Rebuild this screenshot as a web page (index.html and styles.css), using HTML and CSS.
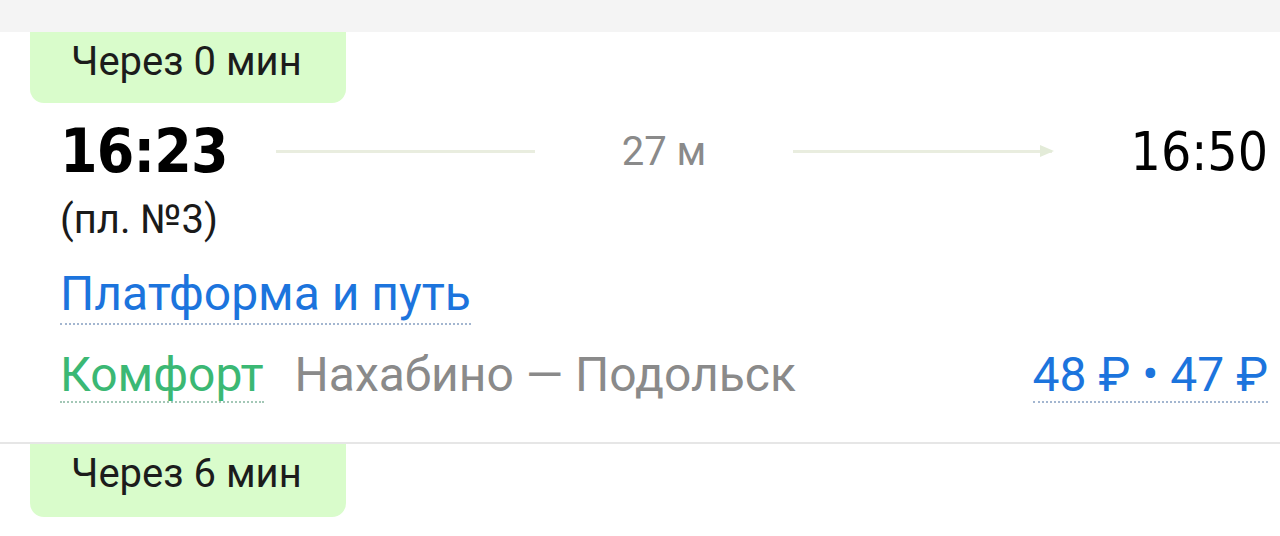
FILE: index.html
```html
<!DOCTYPE html>
<html lang="ru">
<head>
<meta charset="utf-8">
<link rel="stylesheet" href="styles.css">
</head>
<body>
<div class="topbar"></div>
<section class="trip">
  <div class="badge">Через 0 мин</div>
  <div class="body">
    <div class="times">
      <div class="dep">16:23</div>
      <div class="line"></div>
      <div class="dur">27 м</div>
      <div class="line arrow">
        <svg class="head" width="14" height="12" viewBox="0 0 14 12"><path d="M0 0 L14 6 L0 12 Z" fill="#e3ebd8"/></svg>
      </div>
      <div class="arr">16:50</div>
    </div>
    <div class="plat">(пл. №3)</div>
    <div class="link-row"><span class="link">Платформа и путь</span></div>
    <div class="info">
      <span class="cls">Комфорт</span>
      <span class="route">Нахабино — Подольск</span>
      <span class="price">48 ₽ • 47 ₽</span>
    </div>
  </div>
</section>
<section class="trip next">
  <div class="badge tall">Через 6 мин</div>
</section>
</body>
</html>
```
FILE: styles.css
```css
html, body {
  margin: 0;
  padding: 0;
  background: #ffffff;
  width: 1280px;
  height: 536px;
  overflow: hidden;
  font-family: Roboto, "Noto Sans", sans-serif;
}
.topbar {
  height: 32px;
  background: #f4f4f4;
}
.trip {
  padding-left: 30px;
}
.trip.next {
  border-top: 2px solid #e6e6e6;
}
.badge {
  width: 316px;
  height: 71px;
  box-sizing: border-box;
  padding-left: 41px;
  background: #d9fccb;
  border-radius: 0 0 14px 14px;
  color: #1c1c1c;
  font-size: 40px;
  line-height: 60px;
}
.badge.tall {
  height: 73px;
}
.body {
  padding-left: 30px;
  padding-right: 12px;
  height: 339px;
  box-sizing: border-box;
}
.times {
  display: flex;
  align-items: center;
  height: 96px;
}
.dep {
  font-family: "DejaVu Sans Condensed", "DejaVu Sans", sans-serif;
  font-weight: bold;
  font-size: 60px;
  letter-spacing: -0.8px;
  color: #000;
  width: 216px;
}
.line {
  height: 3px;
  background: #e9eddf;
  width: 259px;
  position: relative;
}
.arrow .head {
  position: absolute;
  right: -2px;
  top: -5px;
}
.dur {
  width: 258px;
  text-align: center;
  color: #8a8a8a;
  font-size: 40px;
}
.arr {
  flex: 1;
  text-align: right;
  font-family: "DejaVu Sans Condensed", "DejaVu Sans", sans-serif;
  font-size: 53px;
  color: #000;
}
.plat {
  font-size: 40px;
  color: #1a1a1a;
  line-height: 40px;
  margin-top: 1px;
}
.link-row {
  margin-top: 30px;
  font-size: 48px;
  line-height: 48px;
}
.link {
  color: #1c74dd;
  border-bottom: 2px dotted #a3b6d0;
  padding-bottom: 1px;
}
.info {
  display: flex;
  align-items: baseline;
  margin-top: 33px;
  font-size: 48px;
  line-height: 48px;
}
.cls {
  color: #3bb874;
  border-bottom: 2px dotted #a3c7b6;
  padding-bottom: 2px;
}
.route {
  color: #8a8a8a;
  margin-left: 31px;
}
.price {
  margin-left: auto;
  color: #1c74dd;
  border-bottom: 2px dotted #a3b6d0;
  padding-bottom: 2px;
}
```
